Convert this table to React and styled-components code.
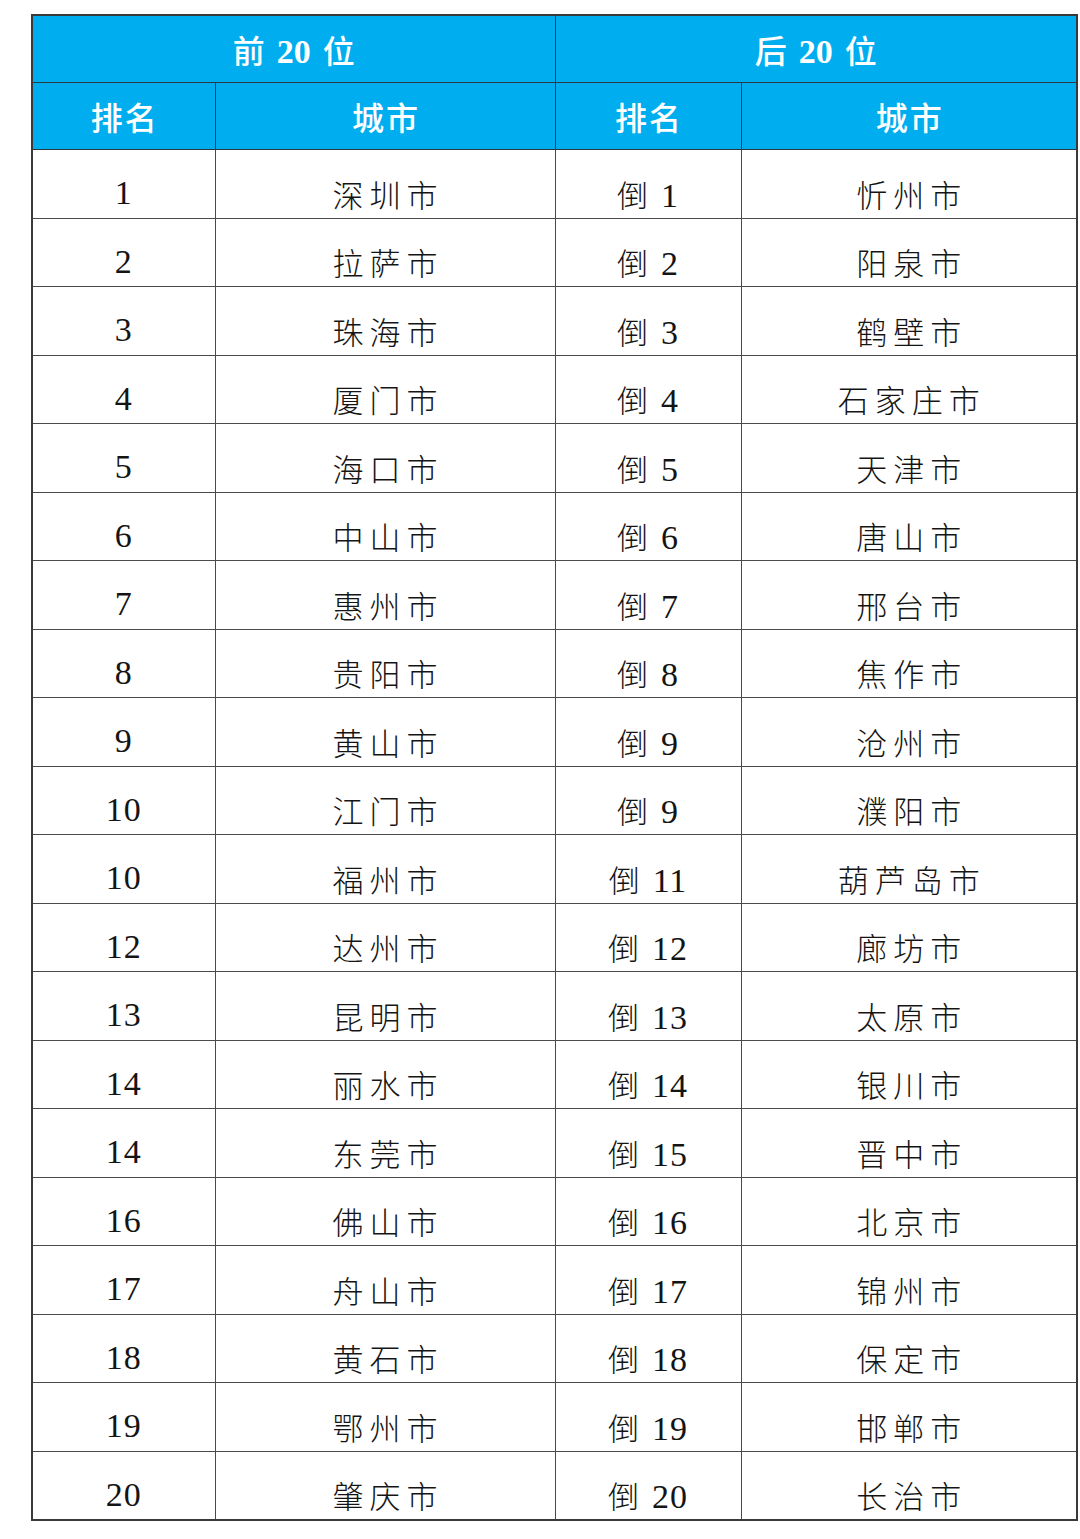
import React from "react";
import styled, { createGlobalStyle } from "styled-components";

const Global = createGlobalStyle`
  html, body { margin: 0; padding: 0; background: #fff; }
  body { font-family: "Liberation Serif", "Noto Sans CJK SC", serif; }
`;

const Page = styled.div`
  padding: 14px 4px 16px 31px;
  width: 1080px;
  box-sizing: border-box;
`;

const Table = styled.table`
  border-collapse: collapse;
  table-layout: fixed;
  width: 1045px;
  border: 2px solid #3a3a3a;
`;

const Col = styled.col`
  width: ${(p) => p.$w}px;
`;

const HeadCell = styled.th`
  background: #00aeef;
  color: #fff;
  height: 66px;
  padding: 0;
  border: 1.5px solid #2b3a40;
  font-family: "Noto Sans CJK SC", sans-serif;
  font-weight: 500;
  font-size: 32px;
  letter-spacing: ${(p) => (p.$wide ? "0" : "2px")};
  text-indent: ${(p) => (p.$wide ? "0" : "2px")};
  text-align: center;
  vertical-align: middle;
`;

const Num = styled.span`
  font-family: "Liberation Serif", serif;
  font-weight: 700;
  font-size: 34px;
  margin: 0 12px;
`;

const Cell = styled.td`
  height: 68.5px;
  padding: 19px 0 0;
  box-sizing: border-box;
  border: 1.5px solid #4a4a4a;
  text-align: center;
  vertical-align: middle;
  color: #141414;
  font-family: ${(p) =>
    p.$city
      ? `"Noto Sans CJK SC", sans-serif`
      : `"Liberation Serif", "Noto Sans CJK SC", serif`};
  font-size: ${(p) => (p.$city ? "31px" : "34px")};
  font-weight: ${(p) => (p.$city ? 300 : 400)};
  letter-spacing: ${(p) => (p.$city ? "6px" : "1px")};
  text-indent: ${(p) => (p.$city ? "6px" : "0")};
`;

const Dao = styled.span`
  font-family: "Noto Sans CJK SC", sans-serif;
  font-weight: 300;
  font-size: 31px;
  margin-right: 12px;
`;

const rows = [
  ["1", "深圳市", "1", "忻州市"],
  ["2", "拉萨市", "2", "阳泉市"],
  ["3", "珠海市", "3", "鹤壁市"],
  ["4", "厦门市", "4", "石家庄市"],
  ["5", "海口市", "5", "天津市"],
  ["6", "中山市", "6", "唐山市"],
  ["7", "惠州市", "7", "邢台市"],
  ["8", "贵阳市", "8", "焦作市"],
  ["9", "黄山市", "9", "沧州市"],
  ["10", "江门市", "9", "濮阳市"],
  ["10", "福州市", "11", "葫芦岛市"],
  ["12", "达州市", "12", "廊坊市"],
  ["13", "昆明市", "13", "太原市"],
  ["14", "丽水市", "14", "银川市"],
  ["14", "东莞市", "15", "晋中市"],
  ["16", "佛山市", "16", "北京市"],
  ["17", "舟山市", "17", "锦州市"],
  ["18", "黄石市", "18", "保定市"],
  ["19", "鄂州市", "19", "邯郸市"],
  ["20", "肇庆市", "20", "长治市"],
];

export default function App() {
  return (
    <>
      <Global />
      <Page>
        <Table>
          <colgroup>
            <Col $w={183} />
            <Col $w={340} />
            <Col $w={186} />
            <Col $w={336} />
          </colgroup>
          <thead>
            <tr>
              <HeadCell colSpan={2} $wide>
                前<Num>20</Num>位
              </HeadCell>
              <HeadCell colSpan={2} $wide>
                后<Num>20</Num>位
              </HeadCell>
            </tr>
            <tr>
              <HeadCell>排名</HeadCell>
              <HeadCell>城市</HeadCell>
              <HeadCell>排名</HeadCell>
              <HeadCell>城市</HeadCell>
            </tr>
          </thead>
          <tbody>
            {rows.map((r, i) => (
              <tr key={i}>
                <Cell>{r[0]}</Cell>
                <Cell $city>{r[1]}</Cell>
                <Cell>
                  <Dao>倒</Dao>
                  {r[2]}
                </Cell>
                <Cell $city>{r[3]}</Cell>
              </tr>
            ))}
          </tbody>
        </Table>
      </Page>
    </>
  );
}
